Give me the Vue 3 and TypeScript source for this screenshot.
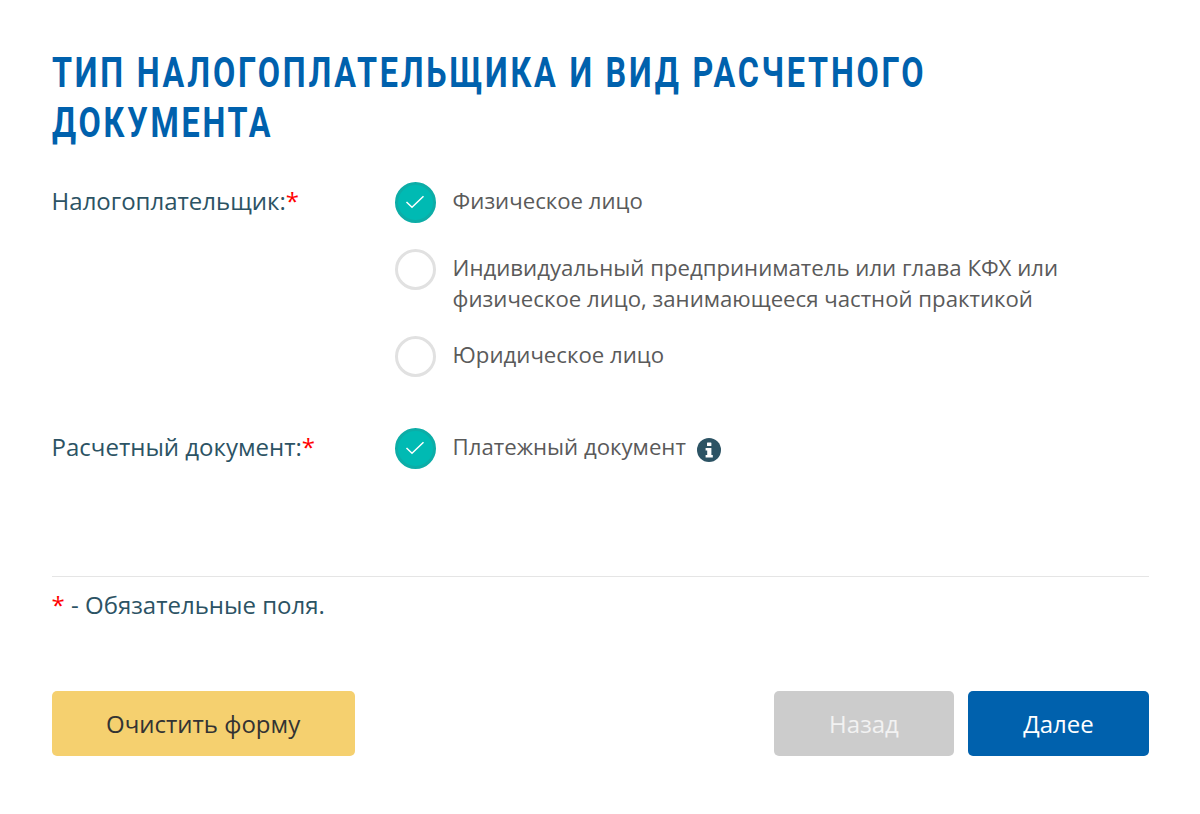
<script setup lang="ts">
const payers = [
  { label: 'Физическое лицо', checked: true },
  { label: 'Индивидуальный предприниматель или глава КФХ или физическое лицо, занимающееся частной практикой', checked: false },
  { label: 'Юридическое лицо', checked: false },
]
</script>

<template>
  <main class="page">
    <h1 class="title">Тип налогоплательщика и вид расчетного документа</h1>

    <section class="field payer">
      <div class="name">Налогоплательщик:<span class="req">*</span></div>
      <div class="options">
        <label v-for="p in payers" :key="p.label" class="option">
          <span class="radio" :class="{ on: p.checked }">
            <svg v-if="p.checked" viewBox="0 0 20 14" width="20" height="14"><path d="M1.5 7 L7 12.3 L18.5 1.2" fill="none" stroke="#fff" stroke-width="1.5"/></svg>
          </span>
          <span class="text">{{ p.label }}</span>
        </label>
      </div>
    </section>

    <section class="field doc">
      <div class="name">Расчетный документ:<span class="req">*</span></div>
      <div class="options">
        <label class="option">
          <span class="radio on">
            <svg viewBox="0 0 20 14" width="20" height="14"><path d="M1.5 7 L7 12.3 L18.5 1.2" fill="none" stroke="#fff" stroke-width="1.5"/></svg>
          </span>
          <span class="text">Платежный документ</span>
          <svg class="info" viewBox="0 0 24 24" width="24" height="24">
            <circle cx="12" cy="12" r="12" fill="#2c5364"/>
            <rect x="10" y="4.5" width="4.4" height="3.6" rx="0.6" fill="#fff"/>
            <path d="M8.6 10h5.8v7h1.4v2.6H8.6V17h1.6v-4.4H8.6z" fill="#fff"/>
          </svg>
        </label>
      </div>
    </section>

    <p class="note"><span class="req">*</span> - Обязательные поля.</p>

    <footer class="actions">
      <button class="btn clear" type="button">Очистить форму</button>
      <div class="nav">
        <button class="btn back" type="button">Назад</button>
        <button class="btn next" type="button">Далее</button>
      </div>
    </footer>
  </main>
</template>

<style>
body { background: #fff; }
</style>

<style scoped>
.page {
  box-sizing: border-box;
  width: 1200px;
  height: 814px;
  padding: 48px 51px 0 51.6px;
  font-family: "Open Sans", sans-serif;
  font-size: 22.2px;
  background: #fff;
  overflow: hidden;
}
.title {
  margin: 0;
  width: 1425px;
  font-family: "Roboto", sans-serif;
  font-size: 42px;
  line-height: 50px;
  font-weight: 700;
  letter-spacing: 3.6px;
  text-transform: uppercase;
  color: #0061ad;
  transform: scaleX(0.77);
  transform-origin: left top;
}
.field { display: flex; }
.payer { margin-top: 33.6px; }
.doc { margin-top: 46px; }
.name {
  width: 343px;
  flex: none;
  color: #2c5364;
  font-size: 24px;
  line-height: 38px;
}
.req { color: #f00; }
.options { display: flex; flex-direction: column; gap: 21px; flex: 1; }
.option { display: flex; align-items: flex-start; min-height: 46px; }
.radio {
  box-sizing: border-box;
  flex: none;
  width: 41px;
  height: 41px;
  border-radius: 50%;
  border: 3px solid #e1e1e1;
  display: flex;
  align-items: center;
  justify-content: center;
  margin-right: 17px;
}
.radio.on { background: #00bab3; border-color: #0cada7; }
.text {
  color: #5a5a5a;
  line-height: 31.3px;
  padding-top: 3.5px;
  max-width: 640px;
}
.info { margin: 10px 0 0 11px; flex: none; }
.note {
  margin: 102px 0 0;
  padding-top: 12px;
  border-top: 1px solid #e5e5e5;
  color: #2c5364;
  font-size: 24px;
  line-height: 32px;
}
.actions {
  display: flex;
  justify-content: space-between;
  margin-top: 70px;
}
.nav { display: flex; gap: 14px; }
.btn {
  height: 65px;
  border: 0;
  border-radius: 5px;
  font-family: inherit;
  font-size: 24px;
  padding: 0;
}
.clear { width: 303px; background: #f5d06f; color: #333; }
.back { width: 180px; background: #cccccc; color: #f2f2f2; }
.next { width: 181px; background: #0061ad; color: #fff; }
</style>
